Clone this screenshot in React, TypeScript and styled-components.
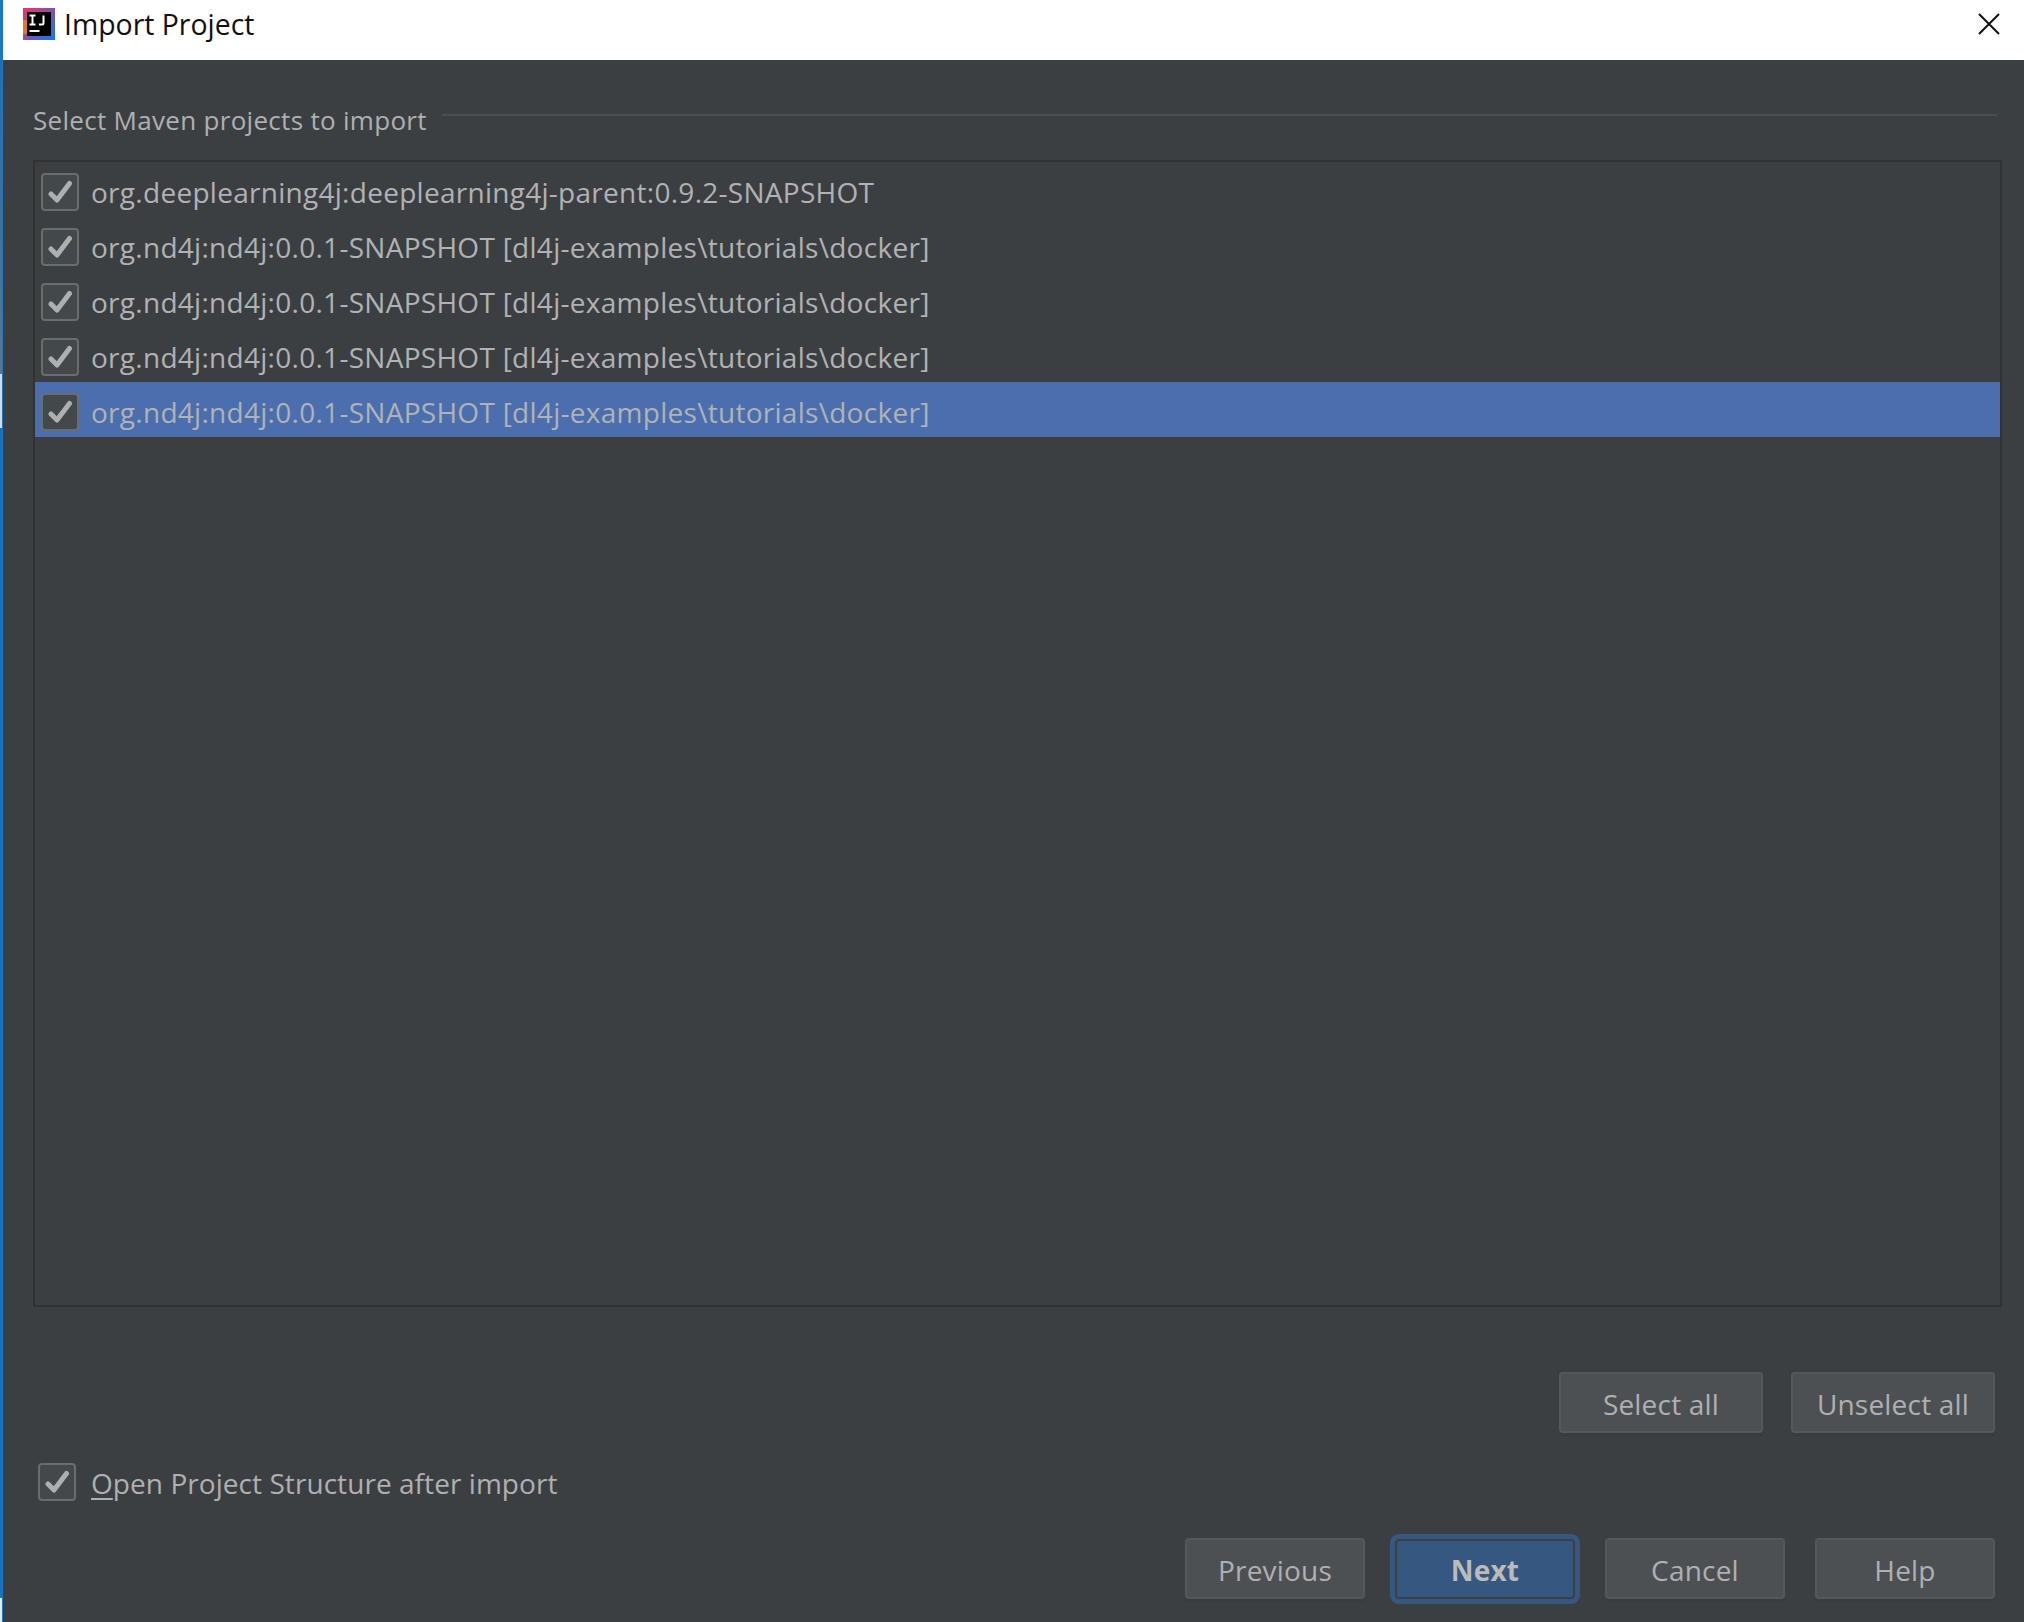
import React from "react";
import styled, { createGlobalStyle } from "styled-components";

const Global = createGlobalStyle`
  html, body { margin: 0; padding: 0; background: #3c3f41; }
  body { font-family: "Open Sans", "Noto Sans", sans-serif; }
`;

const Window = styled.div`
  width: 2024px;
  height: 1622px;
  overflow: hidden;
  display: flex;
  background: #3c3f41;
`;

const EdgeStrip = styled.div`
  width: 3px;
  flex: none;
  background:
    linear-gradient(#1a78c8, #1a78c8) 2px 0 / 1px 100% no-repeat,
    linear-gradient(
      #1a78c8 0 60px,
      #2a6ca8 60px,
      #66727e 374px,
      #d5dade 374px 428px,
      #1a70bc 428px 1598px,
      #e6e8ea 1598px
    );
`;

const Main = styled.div`
  flex: 1;
  min-width: 0;
  display: flex;
  flex-direction: column;
`;

const TitleBar = styled.header`
  height: 60px;
  flex: none;
  background: #fff;
  display: flex;
  align-items: center;
  padding: 0 24px 12px 20px;
  box-sizing: border-box;
  color: #111;
  font-size: 28.4px;
  gap: 9px;
`;

const TitleText = styled.span`
  flex: 1;
`;

const Body = styled.main`
  flex: 1;
  display: flex;
  flex-direction: column;
  padding: 0 27px 0 30px;
`;

const SectionHeader = styled.div`
  display: flex;
  align-items: flex-start;
  height: 100px;
  padding-top: 42px;
  box-sizing: border-box;
  gap: 15px;
`;

const SectionLabel = styled.span`
  color: #aeb0b2;
  font-size: 26px;
  line-height: 36px;
  letter-spacing: 0.3px;
`;

const SectionRule = styled.span`
  flex: 1;
  height: 2px;
  margin-top: 12px;
  background: #4c4d4e;
`;

const List = styled.div`
  height: 1147px;
  width: 1969px;
  box-sizing: border-box;
  border: 2px solid #323232;
`;

const Row = styled.div<{ $selected?: boolean }>`
  height: 55px;
  box-sizing: border-box;
  display: flex;
  align-items: center;
  padding: 5px 0 0 6px;
  gap: 12px;
  color: #b0b2b4;
  font-size: 28px;
  letter-spacing: 0.28px;
  background: ${(p) => (p.$selected ? "#4b6eaf" : "transparent")};
`;

const Box = styled.span`
  width: 38px;
  height: 38px;
  flex: none;
  box-sizing: border-box;
  border: 2px solid #6a6c6e;
  border-radius: 4px;
  background: #43484a;
  display: flex;
  align-items: center;
  justify-content: center;
`;

const Actions = styled.div`
  display: flex;
  justify-content: flex-end;
  gap: 28px;
  padding: 65px 2px 0 0;
`;

const OptionRow = styled.label`
  display: flex;
  align-items: center;
  gap: 15px;
  height: 38px;
  margin-top: 30px;
  padding-left: 5px;
  color: #aeb0b2;
  font-size: 28px;
  letter-spacing: 0.06px;
`;

const OptionText = styled.span`
  position: relative;
  top: 1px;
`;

const Mnemonic = styled.span`
  text-decoration: underline;
  text-underline-offset: 4px;
  text-decoration-thickness: 2px;
`;

const Footer = styled.div`
  display: flex;
  justify-content: flex-end;
  align-items: center;
  gap: 30px;
  padding: 37px 2px 0 0;
`;

const Button = styled.button<{ $w: number; $primary?: boolean }>`
  width: ${(p) => p.$w}px;
  height: ${(p) => (p.$primary ? 60 : 61)}px;
  box-sizing: border-box;
  border-radius: 4px;
  border: 2px solid ${(p) => (p.$primary ? "#3d4043" : "#55585a")};
  background: ${(p) => (p.$primary ? "#365880" : "#4c5052")};
  color: ${(p) => (p.$primary ? "#bbbbbb" : "#aeb0b2")};
  font-family: inherit;
  font-size: 28px;
  letter-spacing: 0.2px;
  font-weight: ${(p) => (p.$primary ? 700 : 400)};
  padding: 3px 0 0;
  box-shadow: ${(p) =>
    p.$primary ? "0 0 0 5px #365880" : "0 3px 0 #393b3d"};
`;

const Check = () => (
  <svg width="26" height="26" viewBox="0 0 26 26" fill="none">
    <path d="M4 15 L10 21 L22.5 4.5" stroke="#adafb1" strokeWidth="5" strokeLinecap="round" strokeLinejoin="round" />
  </svg>
);

const AppLogo = () => (
  <svg width="32" height="32" viewBox="0 0 32 32">
    <defs>
      <linearGradient id="logo" x1="0" y1="0" x2="1" y2="1">
        <stop offset="0" stopColor="#f5316f" />
        <stop offset="0.45" stopColor="#8d4f9e" />
        <stop offset="1" stopColor="#087cfa" />
      </linearGradient>
    </defs>
    <rect width="32" height="32" fill="url(#logo)" />
    <polygon points="0,12 4,12 4,26 0,26" fill="#e07a1f" />
    <rect x="4" y="4" width="24" height="24" fill="#000" />
    <path d="M6.5 7.5h6M9.5 7.5v9M6.5 16.5h6M20.5 7.5v7.5q0 1.5-1.5 1.5h-3" stroke="#fff" strokeWidth="2" fill="none" />
    <rect x="6.5" y="22" width="10" height="2" fill="#fff" />
  </svg>
);

const CloseIcon = () => (
  <svg width="22" height="22" viewBox="0 0 22 22">
    <path d="M1 1 L21 21 M21 1 L1 21" stroke="#111" strokeWidth="2" />
  </svg>
);

const rows = [
  "org.deeplearning4j:deeplearning4j-parent:0.9.2-SNAPSHOT",
  "org.nd4j:nd4j:0.0.1-SNAPSHOT [dl4j-examples\\tutorials\\docker]",
  "org.nd4j:nd4j:0.0.1-SNAPSHOT [dl4j-examples\\tutorials\\docker]",
  "org.nd4j:nd4j:0.0.1-SNAPSHOT [dl4j-examples\\tutorials\\docker]",
  "org.nd4j:nd4j:0.0.1-SNAPSHOT [dl4j-examples\\tutorials\\docker]",
];

export default function App() {
  return (
    <Window>
      <Global />
      <EdgeStrip />
      <Main>
        <TitleBar>
          <AppLogo />
          <TitleText>Import Project</TitleText>
          <CloseIcon />
        </TitleBar>
        <Body>
          <SectionHeader>
            <SectionLabel>Select Maven projects to import</SectionLabel>
            <SectionRule />
          </SectionHeader>
          <List>
            {rows.map((r, i) => (
              <Row key={i} $selected={i === 4}>
                <Box><Check /></Box>
                <span>{r}</span>
              </Row>
            ))}
          </List>
          <Actions>
            <Button $w={204}>Select all</Button>
            <Button $w={204}>Unselect all</Button>
          </Actions>
          <OptionRow>
            <Box><Check /></Box>
            <OptionText><Mnemonic>O</Mnemonic>pen Project Structure after import</OptionText>
          </OptionRow>
          <Footer>
            <Button $w={180}>Previous</Button>
            <Button $w={180} $primary>Next</Button>
            <Button $w={180}>Cancel</Button>
            <Button $w={180}>Help</Button>
          </Footer>
        </Body>
      </Main>
    </Window>
  );
}
